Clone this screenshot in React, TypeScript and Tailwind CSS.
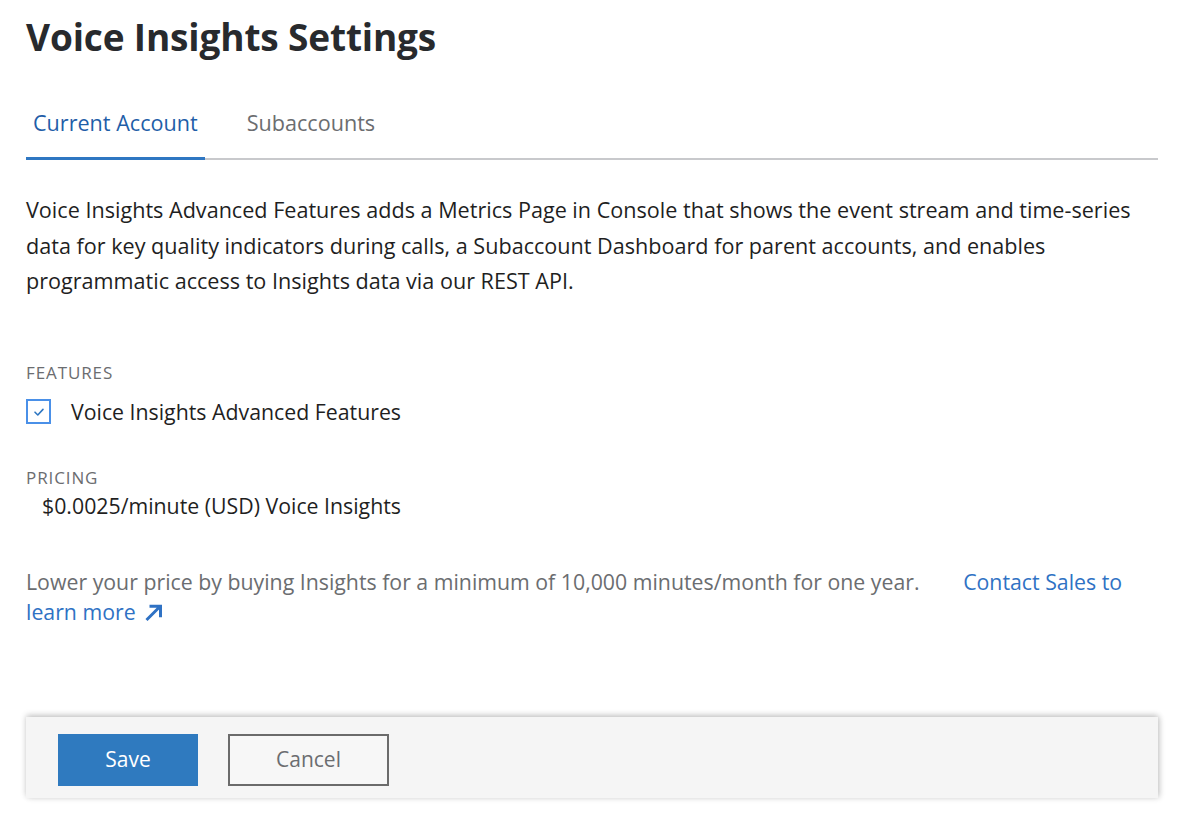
import React, { useState } from 'react';

export default function App() {
  const [tab, setTab] = useState<'current' | 'sub'>('current');
  const [enabled, setEnabled] = useState(true);

  return (
    <div className="min-h-[828px] bg-white px-[26px] pt-[13px] text-[#1f1f1f]" style={{ fontFamily: '"Open Sans", "Liberation Sans", sans-serif' }}>
      <h1 className="text-[37px] font-bold leading-[48px] text-[#282a2d] tracking-[-0.15px]">Voice Insights Settings</h1>

      {/* tabs */}
      <div className="mt-[40px] flex border-b-2 border-[#c8c9cc] mr-[-6px]">
        <button
          onClick={() => setTab('current')}
          className={`-mb-[2px] px-[7px] pb-[20px] pt-[8px] text-[21.6px] leading-[28px] border-b-[3px] ${tab === 'current' ? 'border-[#2f77c2] text-[#1f5ea8]' : 'border-transparent text-[#6b6d70]'}`}
        >
          Current Account
        </button>
        <button
          onClick={() => setTab('sub')}
          className={`-mb-[2px] ml-[35px] px-[7px] pb-[20px] pt-[8px] text-[21.6px] leading-[28px] border-b-[3px] ${tab === 'sub' ? 'border-[#2f77c2] text-[#1f5ea8]' : 'border-transparent text-[#6b6d70]'}`}
        >
          Subaccounts
        </button>
      </div>

      <p className="mt-[32px] text-[21.6px] leading-[35.5px] text-[#1f1f1f]">
        Voice Insights Advanced Features adds a Metrics Page in Console that shows the event stream and time-series data for key quality indicators during calls, a Subaccount Dashboard for parent accounts, and enables programmatic access to Insights data via our REST API.
      </p>

      <div className="mt-[62px] text-[17px] leading-[24px] uppercase tracking-[0.9px] text-[#6b6d70]">Features</div>
      <label className="mt-[13px] flex items-center gap-[20px] cursor-pointer">
        <span
          onClick={() => setEnabled(!enabled)}
          className="flex h-[25px] w-[25px] items-center justify-center border-2 border-[#4a90e8] bg-white"
        >
          {enabled && (
            <svg width="12" height="10" viewBox="0 0 12 10" fill="none">
              <path d="M2 5.2 4.8 8 10 2.4" stroke="#2f77c2" strokeWidth="1.6" strokeLinecap="round" strokeLinejoin="round" />
            </svg>
          )}
        </span>
        <span className="text-[21.3px] leading-[28px] text-[#1f1f1f]">Voice Insights Advanced Features</span>
      </label>

      <div className="mt-[40px] text-[17px] leading-[24px] uppercase tracking-[0.9px] text-[#6b6d70]">Pricing</div>
      <div className="mt-[2px] pl-[16px] text-[21.3px] leading-[28px] text-[#1f1f1f]">$0.0025/minute (USD) Voice Insights</div>

      <p className="mt-[47px] text-[21.3px] leading-[30px] text-[#6b6d70]">
        <span className="mr-[38px]">Lower your price by buying Insights for a minimum of 10,000 minutes/month for one year.</span>{' '}
        <a href="#" className="text-[#2f72c4]">Contact Sales to</a>{' '}
        <a href="#" className="text-[#2f72c4]">
          learn more
          <svg className="ml-[8px] inline-block align-[-2px]" width="19" height="19" viewBox="0 0 19 19" fill="none">
            <path d="M2.5 17 15.5 4M5.5 3.2h11v11" stroke="#2f72c4" strokeWidth="3" />
          </svg>
        </a>
      </p>

      {/* footer actions */}
      <div className="mt-[90px] mr-[-6px] flex gap-[30px] bg-[#f5f5f5] px-[32px] pt-[17px] pb-[12px] shadow-[0_-2px_6px_rgba(0,0,0,0.18),2px_0_6px_rgba(0,0,0,0.12)]">
        <button className="h-[52px] w-[140px] bg-[#2f7abf] text-[21px] text-white">Save</button>
        <button className="h-[52px] w-[161px] border-2 border-[#6b6b6b] bg-[#f7f7f7] text-[21px] text-[#6b6d70]">Cancel</button>
      </div>
    </div>
  );
}
